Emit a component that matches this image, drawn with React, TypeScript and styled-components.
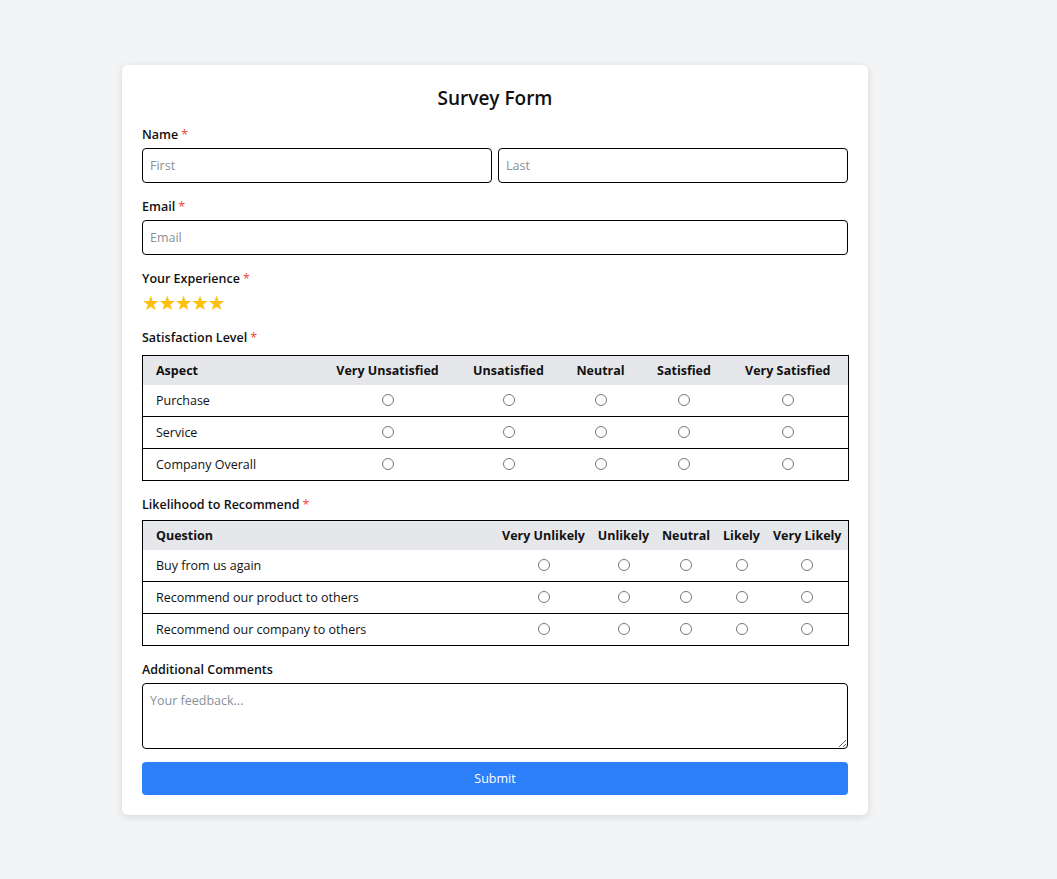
import React from 'react';
import styled, { createGlobalStyle } from 'styled-components';

const GlobalStyle = createGlobalStyle`
	body {
		margin: 0;
		background: #f3f4f6;
		font-family: 'Open Sans', 'Noto Sans', 'Liberation Sans', sans-serif;
		color: #111;
	}
`;

const Page = styled.div`
	min-height: 879px;
	padding: 65px 0 0 122px;
	box-sizing: border-box;
`;

const Card = styled.form`
	width: 746px;
	box-sizing: border-box;
	background: #fff;
	border-radius: 6px;
	box-shadow: 0 2px 8px rgba(0, 0, 0, 0.12);
	padding: 21px 20px 20px;
	display: flex;
	flex-direction: column;
	gap: 14px;
`;

const Title = styled.h1`
	margin: 0;
	font-size: 19px;
	line-height: 25px;
	font-weight: 600;
	text-align: center;
`;

const Field = styled.div`
	display: flex;
	flex-direction: column;
	gap: 3px;
`;

const Label = styled.label`
	font-size: 12.5px;
	line-height: 20px;
	font-weight: 600;
`;

const Required = styled.span`
	color: #ef4444;
	font-weight: 400;
	margin-left: 3px;
`;

const Row = styled.div`
	display: flex;
	gap: 6px;
`;

const Input = styled.input`
	flex: 1;
	min-width: 0;
	height: 35px;
	box-sizing: border-box;
	border: 1px solid #000;
	border-radius: 4px;
	padding: 0 7px;
	font: inherit;
	font-size: 12.5px;
	&::placeholder {
		color: #8a8f98;
	}
`;

const Stars = styled.div`
	display: flex;
	font-size: 20px;
	line-height: 22px;
	color: #ffc107;
	font-family: 'DejaVu Sans', sans-serif;
	letter-spacing: -1.5px;
`;

const Table = styled.table<{ $offset: number }>`
	width: 100%;
	border-collapse: collapse;
	border: 1px solid #000;
	margin-top: ${(p) => p.$offset}px;
	table-layout: fixed;
	font-size: 12.5px;
`;

const Th = styled.th<{ $left?: boolean }>`
	background: #e5e7eb;
	font-weight: 700;
	height: 29px;
	padding: 0;
	text-align: ${(p) => (p.$left ? 'left' : 'center')};
	padding-left: ${(p) => (p.$left ? '13px' : '0')};
	white-space: nowrap;
`;

const Td = styled.td<{ $left?: boolean }>`
	height: 31px;
	padding: 0;
	padding-left: ${(p) => (p.$left ? '13px' : '0')};
	text-align: ${(p) => (p.$left ? 'left' : 'center')};
	vertical-align: middle;
`;

const Tr = styled.tr`
	& + & {
		border-top: 1px solid #000;
	}
`;

const Radio = styled.input`
	margin: 0;
	width: 12px;
	height: 12px;
	vertical-align: middle;
	position: relative;
	top: -2px;
`;

const TextArea = styled.textarea`
	height: 66px;
	box-sizing: border-box;
	border: 1px solid #000;
	border-radius: 4px;
	padding: 8px 7px;
	font: inherit;
	font-size: 12.5px;
	resize: vertical;
	&::placeholder {
		color: #8a8f98;
	}
`;

const Submit = styled.button`
	height: 33px;
	margin-top: -1px;
	border: none;
	border-radius: 4px;
	background: #2d7ff9;
	color: #fff;
	font: inherit;
	font-size: 12.5px;
	cursor: pointer;
`;

interface MatrixProps {
	name: string;
	first: string;
	columns: { label: string; width: number }[];
	firstWidth: number;
	rows: string[];
	offset: number;
}

const Matrix = ({ name, first, columns, firstWidth, rows, offset }: MatrixProps) => (
	<Table $offset={offset}>
		<colgroup>
			<col style={{ width: firstWidth }} />
			{columns.map((c) => (
				<col key={c.label} style={{ width: c.width }} />
			))}
		</colgroup>
		<thead>
			<tr>
				<Th $left>{first}</Th>
				{columns.map((c) => (
					<Th key={c.label}>{c.label}</Th>
				))}
			</tr>
		</thead>
		<tbody>
			{rows.map((r, i) => (
				<Tr key={r}>
					<Td $left>{r}</Td>
					{columns.map((c) => (
						<Td key={c.label}>
							<Radio type="radio" name={`${name}-${i}`} />
						</Td>
					))}
				</Tr>
			))}
		</tbody>
	</Table>
);

export default function App() {
	return (
		<Page>
			<GlobalStyle />
			<Card onSubmit={(e) => e.preventDefault()}>
				<Title>Survey Form</Title>
				<Field>
					<Label>
						Name<Required>*</Required>
					</Label>
					<Row>
						<Input placeholder="First" />
						<Input placeholder="Last" />
					</Row>
				</Field>
				<Field>
					<Label>
						Email<Required>*</Required>
					</Label>
					<Row>
						<Input placeholder="Email" />
					</Row>
				</Field>
				<Field>
					<Label>
						Your Experience<Required>*</Required>
					</Label>
					<Stars>★★★★★</Stars>
				</Field>
				<Field>
					<Label>
						Satisfaction Level<Required>*</Required>
					</Label>
					<Matrix
						name="sat"
						first="Aspect"
						firstWidth={176}
						offset={4}
						columns={[
							{ label: 'Very Unsatisfied', width: 138 },
							{ label: 'Unsatisfied', width: 104 },
							{ label: 'Neutral', width: 80 },
							{ label: 'Satisfied', width: 87 },
							{ label: 'Very Satisfied', width: 121 },
						]}
						rows={['Purchase', 'Service', 'Company Overall']}
					/>
				</Field>
				<Field>
					<Label>
						Likelihood to Recommend<Required>*</Required>
					</Label>
					<Matrix
						name="rec"
						first="Question"
						firstWidth={353}
						offset={2}
						columns={[
							{ label: 'Very Unlikely', width: 96 },
							{ label: 'Unlikely', width: 64 },
							{ label: 'Neutral', width: 61 },
							{ label: 'Likely', width: 50 },
							{ label: 'Very Likely', width: 82 },
						]}
						rows={[
							'Buy from us again',
							'Recommend our product to others',
							'Recommend our company to others',
						]}
					/>
				</Field>
				<Field>
					<Label>Additional Comments</Label>
					<TextArea placeholder="Your feedback..." />
				</Field>
				<Submit type="submit">Submit</Submit>
			</Card>
		</Page>
	);
}
